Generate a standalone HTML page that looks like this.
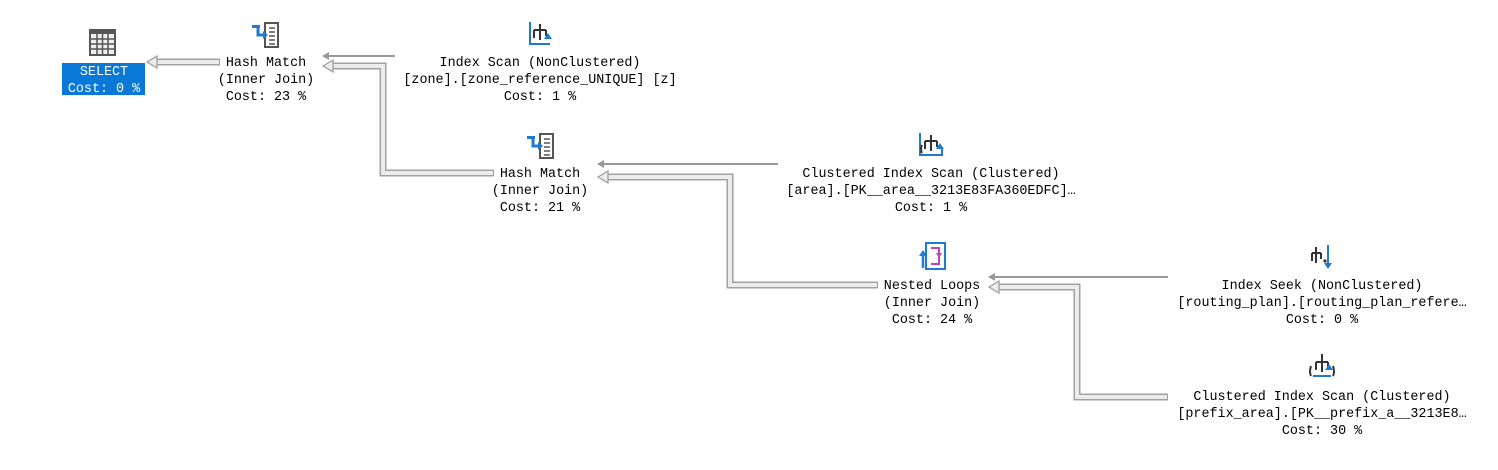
<!DOCTYPE html>
<html><head><style>
body{margin:0;width:1498px;height:470px;background:#fff;position:relative;overflow:hidden;font-family:"Liberation Mono",monospace;}
.t{position:absolute;font-size:13.4px;line-height:17px;color:#000;text-align:center;white-space:pre;transform:translateX(-50%);}
svg{position:absolute;left:0;top:0}
</style></head><body>
<svg width="1498" height="470" viewBox="0 0 1498 470">
<g fill="none" stroke-linejoin="miter">
<g stroke="#a0a0a0" stroke-width="7">
<polyline points="220,62 156,62"/>
<polyline points="494,173 383,173 383,66 332,66"/>
<polyline points="878,285 730,285 730,177 607,177"/>
<polyline points="1168,397 1077,397 1077,287 998,287"/>
</g>
<g stroke="#ececec" stroke-width="4">
<polyline points="219,62 156,62"/>
<polyline points="493,173 383,173 383,66 332,66"/>
<polyline points="877,285 730,285 730,177 607,177"/>
<polyline points="1167,397 1077,397 1077,287 998,287"/>
</g>
</g>
<g fill="#ececec" stroke="#a0a0a0" stroke-width="1.3">
<polygon points="147,62 157,56 157,68"/>
<polygon points="323,66 333,60 333,72"/>
<polygon points="598,177 608,171 608,183"/>
<polygon points="989,287 999,281 999,293"/>
</g>
<g stroke="#999" stroke-width="2" fill="none">
<line x1="395" y1="56" x2="326" y2="56"/>
<line x1="778" y1="164" x2="601" y2="164"/>
<line x1="1168" y1="277" x2="992" y2="277"/>
</g>
<g fill="#999">
<polygon points="322,56 329,52 329,60"/>
<polygon points="597,164 604,160 604,168"/>
<polygon points="988,277 995,273 995,281"/>
</g>
<g transform="translate(89,29)">
<rect x="0" y="0" width="27" height="27" fill="#555"/>
<rect x="2" y="5" width="23" height="20" fill="#eee"/>
<g stroke="#555" stroke-width="1.5">
<line x1="2" y1="10" x2="25" y2="10"/><line x1="2" y1="15" x2="25" y2="15"/><line x1="2" y1="20" x2="25" y2="20"/>
<line x1="8" y1="5" x2="8" y2="25"/><line x1="13.5" y1="5" x2="13.5" y2="25"/><line x1="19" y1="5" x2="19" y2="25"/>
</g>
</g>
<rect x="62" y="63" width="83" height="32" fill="#0a78d7"/>
<g id="hm" transform="translate(252,22)">
<rect x="13" y="1" width="13" height="24" fill="none" stroke="#555" stroke-width="2"/>
<g stroke="#555" stroke-width="1.5"><line x1="17" y1="6" x2="23" y2="6"/><line x1="17" y1="10" x2="23" y2="10"/><line x1="17" y1="14" x2="23" y2="14"/><line x1="17" y1="18" x2="23" y2="18"/><line x1="17" y1="22" x2="23" y2="22"/></g>
<rect x="0" y="3" width="8" height="3" fill="#1e7bd0"/>
<path d="M6 6 V13 H12" stroke="#1e7bd0" stroke-width="3" fill="none"/>
<polygon points="11,9 16,13 11,17" fill="#1e7bd0"/>
</g>
<use href="#hm" transform="translate(275,111)"/>
<g transform="translate(528,20)">
<path d="M2 2 V24 H22" stroke="#1e7bd0" stroke-width="2" fill="none"/>
<path d="M12 4 V20 M6 10 H18 M6 10 V18 M18 10 V16" stroke="#333" stroke-width="2" fill="none"/>
<polygon points="20,13 24,19 16,19" fill="#1e7bd0"/>
</g>
<g transform="translate(918,131)">
<path d="M2 2 V24 H24 V18" stroke="#1e7bd0" stroke-width="2" fill="none"/>
<path d="M13 4 V20 M7 10 H19 M7 10 V18 M19 10 V16 M4 14 Q2 18 4 22" stroke="#333" stroke-width="2" fill="none"/>
<polygon points="22,12 26,18 18,18" fill="#1e7bd0"/>
</g>
<g transform="translate(1309,352)">
<path d="M13 2 V20 M7 10 H19 M7 10 V18 M19 10 V16" stroke="#333" stroke-width="2" fill="none"/>
<path d="M2 14 Q0 20 2 24 M24 14 Q26 20 24 24" stroke="#333" stroke-width="2" fill="none"/>
<path d="M4 24 H22" stroke="#1e7bd0" stroke-width="2"/>
<polygon points="20,12 24,18 16,18" fill="#1e7bd0"/>
</g>
<g transform="translate(919,242)">
<rect x="7" y="1" width="19" height="26" fill="none" stroke="#1e7bd0" stroke-width="2"/>
<path d="M12 6 H20 V22 H12" stroke="#c040c0" stroke-width="2" fill="none"/>
<polygon points="17,11 23,11 20,16" fill="#c040c0"/>
<path d="M4 26 V13" stroke="#1e7bd0" stroke-width="2.5"/>
<polygon points="0,14 4,8 8,14" fill="#1e7bd0"/>
</g>
<g transform="translate(1310,243)">
<path d="M6 4 V20 M2 10 H11 M2 10 V18 M11 10 V16" stroke="#333" stroke-width="2" fill="none"/>
<circle cx="15" cy="18" r="1.6" fill="#333"/>
<path d="M18 2 V20" stroke="#1e7bd0" stroke-width="2"/>
<polygon points="14,20 22,20 18,26" fill="#1e7bd0"/>
</g>
</svg>
<div class="t" style="left:104px;top:64px;color:#fff">SELECT
Cost: 0 %</div>
<div class="t" style="left:266px;top:55px">Hash Match
(Inner Join)
Cost: 23 %</div>
<div class="t" style="left:540px;top:55px">Index Scan (NonClustered)
[zone].[zone_reference_UNIQUE] [z]
Cost: 1 %</div>
<div class="t" style="left:540px;top:166px">Hash Match
(Inner Join)
Cost: 21 %</div>
<div class="t" style="left:931px;top:166px">Clustered Index Scan (Clustered)
[area].[PK__area__3213E83FA360EDFC]…
Cost: 1 %</div>
<div class="t" style="left:932px;top:278px">Nested Loops
(Inner Join)
Cost: 24 %</div>
<div class="t" style="left:1322px;top:278px">Index Seek (NonClustered)
[routing_plan].[routing_plan_refere…
Cost: 0 %</div>
<div class="t" style="left:1322px;top:389px">Clustered Index Scan (Clustered)
[prefix_area].[PK__prefix_a__3213E8…
Cost: 30 %</div>
</body></html>
